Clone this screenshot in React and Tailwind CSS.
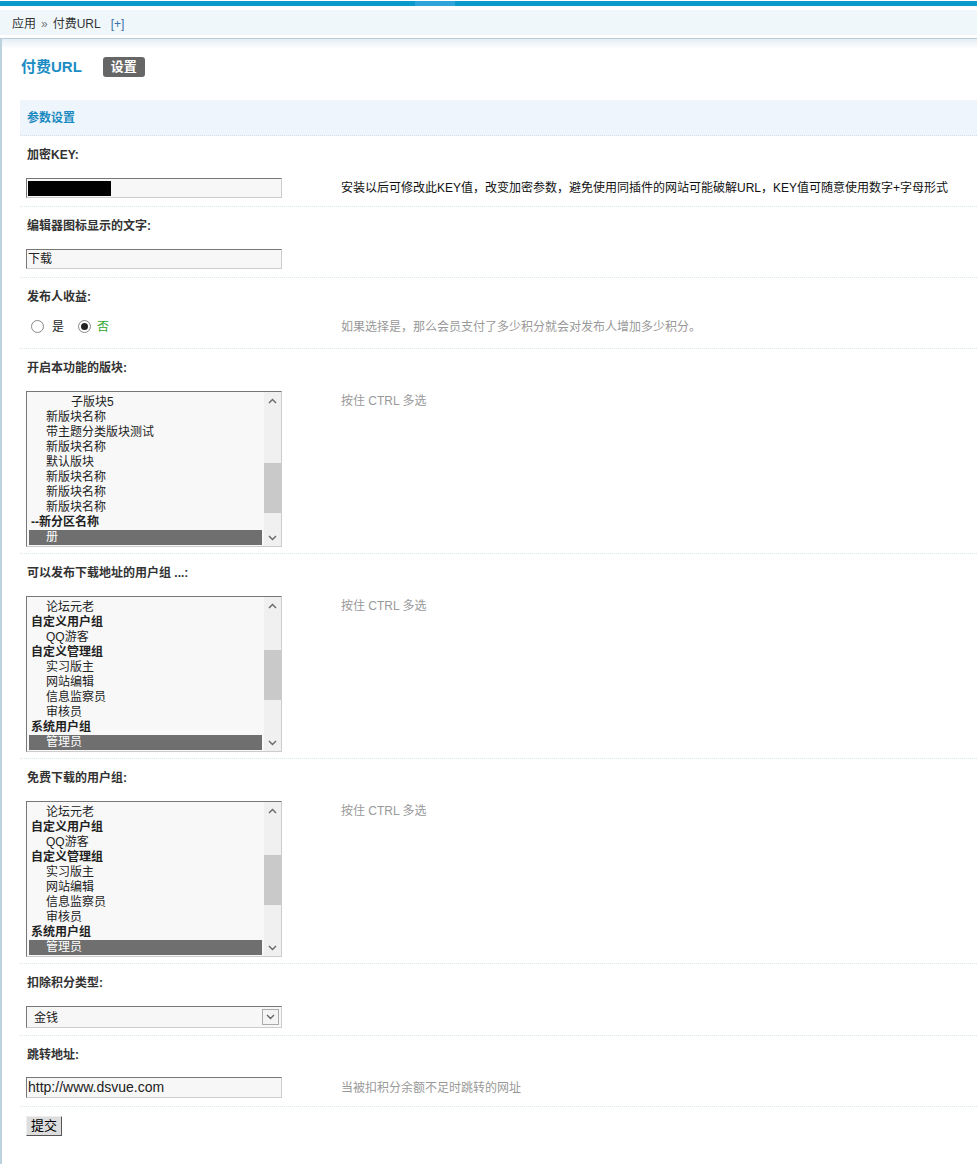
import React from 'react';

const forums = [
    { t: '子版块5', lv: 2 },
    { t: '新版块名称', lv: 1 },
    { t: '带主题分类版块测试', lv: 1 },
    { t: '新版块名称', lv: 1 },
    { t: '默认版块', lv: 1 },
    { t: '新版块名称', lv: 1 },
    { t: '新版块名称', lv: 1 },
    { t: '新版块名称', lv: 1 },
    { t: '--新分区名称', lv: 0, bold: true },
    { t: '册', lv: 1, sel: true },
];

const groups = [
    { t: '论坛元老', lv: 1 },
    { t: '自定义用户组', lv: 0, bold: true },
    { t: 'QQ游客', lv: 1 },
    { t: '自定义管理组', lv: 0, bold: true },
    { t: '实习版主', lv: 1 },
    { t: '网站编辑', lv: 1 },
    { t: '信息监察员', lv: 1 },
    { t: '审核员', lv: 1 },
    { t: '系统用户组', lv: 0, bold: true },
    { t: '管理员', lv: 1, sel: true },
];

const indent = ['pl-[2px]', 'pl-[17px]', 'pl-[42px]'];

const Chevron = ({ up }) => (
    <svg width="9" height="6" viewBox="0 0 9 6" className="text-[#666]">
        <path d={up ? 'M1 5 L4.5 1.5 L8 5' : 'M1 1 L4.5 4.5 L8 1'} fill="none" stroke="currentColor" strokeWidth="1.4" />
    </svg>
);

const ListBox = ({ items, spacer }) => (
    <div className="flex h-[156px] w-[256px] border border-t-[#777] border-l-[#777] border-r-[#ccc] border-b-[#ccc] bg-[#f8f8f8]">
        <div className="flex-1 overflow-hidden px-[2px] pt-[3px]">
            {items.map((it, i) => (
                <div
                    key={i}
                    className={`h-[15px] whitespace-nowrap text-[12px] leading-[15px] ${indent[it.lv]} ${it.bold ? 'font-bold text-[#222]' : 'text-[#222]'} ${it.sel ? 'bg-[#6f6f6f] text-white' : ''}`}
                >
                    {it.t}
                </div>
            ))}
        </div>
        <div className="flex w-[17px] flex-col bg-[#f0f0f0]">
            <div className="flex h-[17px] items-center justify-center"><Chevron up /></div>
            <div className={spacer} />
            <div className="h-[50px] bg-[#c9c9c9]" />
            <div className="flex-1" />
            <div className="flex h-[17px] items-center justify-center"><Chevron /></div>
        </div>
    </div>
);

const Input = ({ children, className = '' }) => (
    <div className={`flex w-[256px] items-center border border-t-[#777] border-l-[#777] border-r-[#ccc] border-b-[#ccc] bg-[#f7f7f7] pl-[1px] ${className}`}>
        {children}
    </div>
);

const Radio = ({ checked }) => (
    <span className="flex h-[13px] w-[13px] items-center justify-center rounded-full border border-[#888] bg-white">
        {checked && <span className="h-[7px] w-[7px] rounded-full bg-[#222]" />}
    </span>
);

const Row = ({ label, children, tip, tipDark, top, ctrl = 'pt-[6px] pb-[8px]' }) => (
    <div className="border-b border-dotted border-[#d9e6ee]">
        <div className="pl-[7px] pt-[11px] pb-[9px] text-[12px] font-bold leading-[16px] text-[#333]">{label}</div>
        <div className={`flex pl-[6px] ${top ? 'items-start' : 'items-center'} ${ctrl}`}>
            <div className="w-[315px] shrink-0">{children}</div>
            {tip && (
                <div className={`text-[12px] leading-[16px] ${tipDark ? 'text-[#111]' : 'text-[#999]'} ${top ? 'pt-[2px]' : ''}`}>{tip}</div>
            )}
        </div>
    </div>
);

export default function App() {
    return (
        <div className="min-h-[1165px] w-[977px] bg-white font-['Liberation_Sans','Noto_Sans_CJK_SC',sans-serif] text-[#333]">
            <div className="h-[1px]" />
            <div className="flex h-[5px] bg-[#0b99cc]">
                <div className="w-[415px]" />
                <div className="w-[40px] bg-[#2ea4d8]" />
            </div>
            <div className="h-[4px]" />
            <div className="flex h-[25px] items-center bg-[#f0f7fb] pl-[12px] pt-[3px] text-[12px] text-[#333]">
                <span>应用</span>
                <span className="mx-[5px] text-[12px] text-[#777]">»</span>
                <span>付费URL</span>
                <span className="ml-[10px] text-[#3a6fa8]">[+]</span>
            </div>
            <div className="h-[3px]" />
            <div className="h-[1px] bg-[#b8ccd9]" />

            <div className="border-l-2 border-[#bcd3df] pb-[28px]">
                <div className="h-[10px] bg-gradient-to-b from-[#e4eef5] to-white" />
                <div className="pl-[18px]">
                    <div className="mt-[8px] mb-[23px] flex h-[20px] items-center pl-[1px]">
                        <span className="text-[15px] font-bold text-[#1b8cc4]">付费URL</span>
                        <span className="ml-[21px] flex h-[20px] items-center rounded-[3px] bg-[#666] px-[8px] text-[13px] font-bold text-white">设置</span>
                    </div>

                    <div className="flex h-[36px] items-center border-b border-dotted border-[#d0e0ea] bg-[#eef5fc] pl-[7px] text-[12px] font-bold text-[#1b8ac0]">
                        参数设置
                    </div>

                    <Row label="加密KEY:" tip="安装以后可修改此KEY值，改变加密参数，避免使用同插件的网站可能破解URL，KEY值可随意使用数字+字母形式" tipDark>
                        <Input className="h-[20px]">
                            <div className="h-[15px] w-[83px] bg-black" />
                        </Input>
                    </Row>

                    <Row label="编辑器图标显示的文字:">
                        <Input className="h-[20px] text-[12px] text-[#222]">下载</Input>
                    </Row>

                    <Row label="发布人收益:" tip="如果选择是，那么会员支付了多少积分就会对发布人增加多少积分。" ctrl="pt-[6px] pb-[15px] h-[34px]">
                        <div className="flex h-[13px] items-center pl-[5px] text-[12px]">
                            <Radio />
                            <span className="ml-[8px] text-[#222]">是</span>
                            <span className="ml-[14px]"><Radio checked /></span>
                            <span className="ml-[6px] text-[#2da52d]">否</span>
                        </div>
                    </Row>

                    <Row label="开启本功能的版块:" tip="按住 CTRL 多选" top ctrl="pt-[6px] pb-[6px]">
                        <ListBox items={forums} spacer="h-[54px]" />
                    </Row>

                    <Row label="可以发布下载地址的用户组 ...:" tip="按住 CTRL 多选" top ctrl="pt-[6px] pb-[6px]">
                        <ListBox items={groups} spacer="h-[36px]" />
                    </Row>

                    <Row label="免费下载的用户组:" tip="按住 CTRL 多选" top ctrl="pt-[6px] pb-[6px]">
                        <ListBox items={groups} spacer="h-[36px]" />
                    </Row>

                    <Row label="扣除积分类型:" ctrl="pt-[6px] pb-[7px]">
                        <Input className="h-[22px] justify-between pr-[2px] text-[12px] text-[#222]">
                            <span className="pl-[6px] pt-[2px]">金钱</span>
                            <span className="flex h-[16px] w-[17px] items-center justify-center border border-[#aaa] bg-[#f4f4f4]"><Chevron /></span>
                        </Input>
                    </Row>

                    <Row label="跳转地址:" tip="当被扣积分余额不足时跳转的网址" ctrl="pt-[5px] pb-[8px]">
                        <Input className="h-[21px] text-[14px] text-[#222]">http://www.dsvue.com</Input>
                    </Row>

                    <div className="pl-[6px] pt-[9px]">
                        <button className="flex h-[20px] w-[36px] items-center justify-center border border-t-[#eee] border-l-[#eee] border-r-[#555] border-b-[#555] bg-[#ddd] text-[13px] text-black">
                            提交
                        </button>
                    </div>
                </div>
            </div>
        </div>
    );
}
